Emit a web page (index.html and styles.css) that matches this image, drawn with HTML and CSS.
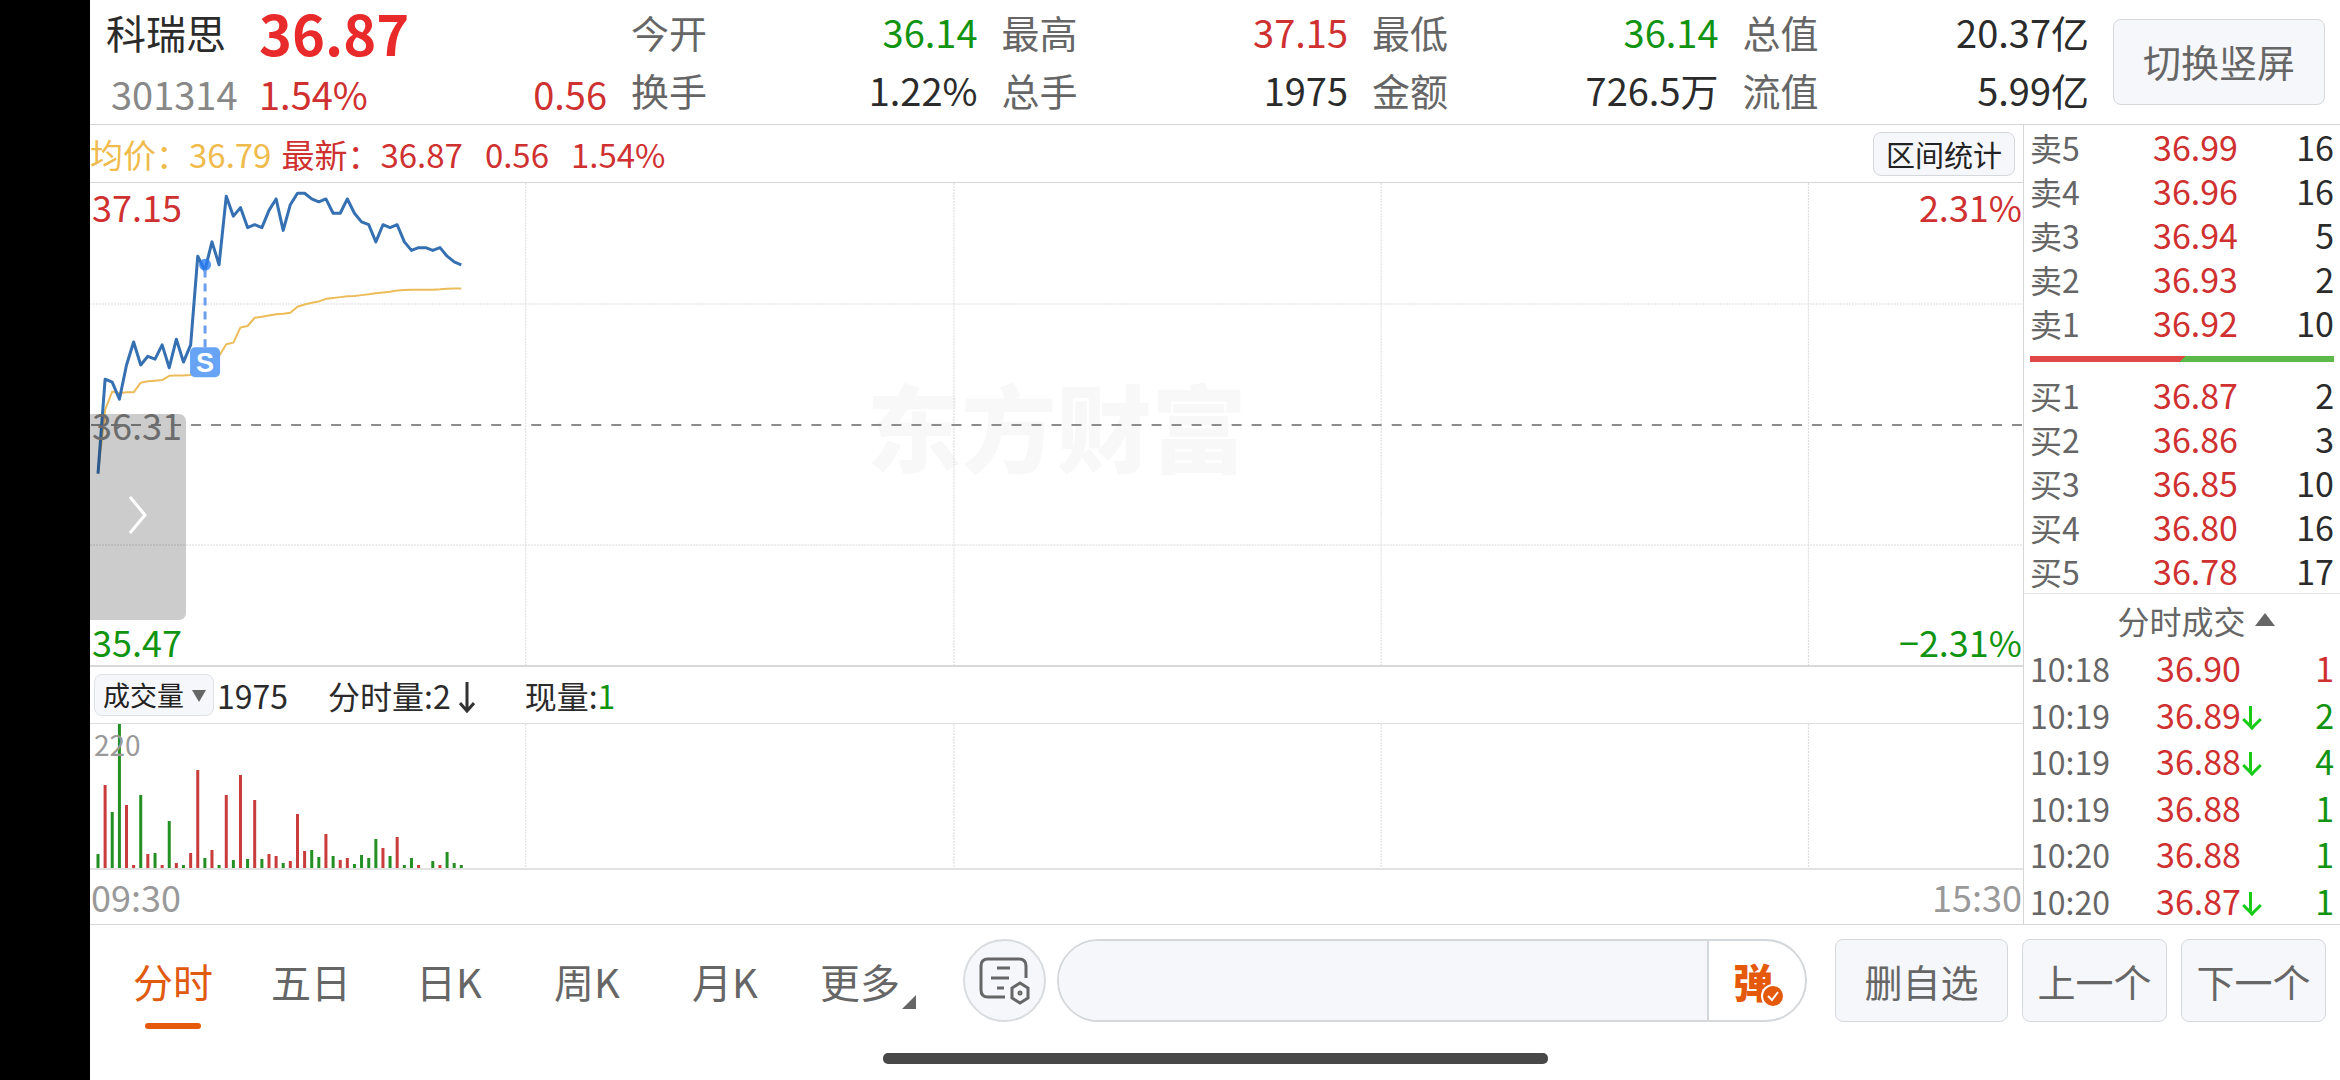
FILE: index.html
```html
<!DOCTYPE html>
<html lang="zh-CN">
<head>
    <meta charset="UTF-8">
    <meta name="viewport" content="width=device-width, initial-scale=1.0">
    <title>科瑞思 301314</title>
    <link rel="stylesheet" href="styles.css">
</head>
<body>
    <div class="app">
        <!-- 顶部行情 -->
        <header class="header">
            <div class="quote">
                <h1 class="stock-name">科瑞思</h1>
                <div class="last-price">36.87</div>
                <div class="stock-code">301314</div>
                <div class="change red"><span>1.54%</span><span>0.56</span></div>
            </div>
            <dl class="stats">
                <div class="stat"><dt>今开</dt><dd class="green">36.14</dd></div>
                <div class="stat"><dt>最高</dt><dd class="red">37.15</dd></div>
                <div class="stat"><dt>最低</dt><dd class="green">36.14</dd></div>
                <div class="stat"><dt>总值</dt><dd>20.37亿</dd></div>
                <div class="stat"><dt>换手</dt><dd>1.22%</dd></div>
                <div class="stat"><dt>总手</dt><dd>1975</dd></div>
                <div class="stat"><dt>金额</dt><dd>726.5万</dd></div>
                <div class="stat"><dt>流值</dt><dd>5.99亿</dd></div>
            </dl>
            <button class="btn btn-rotate">切换竖屏</button>
        </header>

        <main class="main">
            <section class="charts">
                <div class="legend">
                    <span class="legend-avg">均价：</span>
                    <span class="legend-avg legend-value">36.79</span>
                    <span class="red">最新：</span>
                    <span class="red legend-last">36.87</span>
                    <span class="red legend-last">0.56</span>
                    <span class="red">1.54%</span>
                    <button class="btn btn-range">区间统计</button>
                </div>

                <!-- 分时图 -->
                <div class="price-chart">
                    <div class="watermark">东方财富</div>
                    <svg class="plot" viewBox="0 0 1932 484" preserveAspectRatio="none">
                        <g class="grid">
                            <path d="M435.5 0V484M863.5 0V484M1290.5 0V484M1717.5 0V484"/>
                            <path d="M0 121.5H1932M0 363.5H1932"/>
                        </g>
                        <path class="base-line" d="M1 243H1932"/>
                        <polyline id="avgLine" class="avg-line"/>
                        <polyline id="priceLine" class="price-line"/>
                        <circle class="trade-dot" cx="115" cy="82" r="6"/>
                        <path class="trade-stem" d="M115 87V165"/>
                        <rect class="trade-box" x="100" y="165" width="30" height="30" rx="5"/>
                        <text class="trade-text" x="115" y="190">S</text>
                    </svg>
                    <span class="axis axis-high red">37.15</span>
                    <span class="axis axis-mid">36.31</span>
                    <span class="axis axis-low green">35.47</span>
                    <span class="axis axis-up red">2.31%</span>
                    <span class="axis axis-down green">−2.31%</span>
                    <button class="drawer" aria-label="展开">
                        <svg width="18" height="38" viewBox="0 0 18 38"><path d="M1 1L16 19L1 37"/></svg>
                    </button>
                </div>

                <!-- 成交量 -->
                <div class="volume-head">
                    <div class="select-wrap">
                        <select class="indicator" aria-label="指标">
                            <option>成交量</option>
                        </select>
                    </div>
                    <span class="volume-total">1975</span>
                    <span class="volume-minute">分时量:2<svg width="16" height="32" viewBox="0 0 16 32"><path d="M8 1V30M1 22L8 30L15 22"/></svg></span>
                    <span>现量:<span class="green">1</span></span>
                </div>
                <div class="volume-chart">
                    <svg class="plot" viewBox="0 0 1932 144" preserveAspectRatio="none">
                        <path class="grid" d="M435.5 0V144M863.5 0V144M1290.5 0V144M1717.5 0V144"/>
                        <g id="volumeBars"></g>
                    </svg>
                    <span class="volume-max">220</span>
                </div>
                <div class="time-axis"><span>09:30</span><span>15:30</span></div>
            </section>

            <aside class="side">
                <!-- 五档盘口 -->
                <table class="book">
                    <tr><th>卖5</th><td class="red">36.99</td><td>16</td></tr>
                    <tr><th>卖4</th><td class="red">36.96</td><td>16</td></tr>
                    <tr><th>卖3</th><td class="red">36.94</td><td>5</td></tr>
                    <tr><th>卖2</th><td class="red">36.93</td><td>2</td></tr>
                    <tr><th>卖1</th><td class="red">36.92</td><td>10</td></tr>
                </table>
                <div class="ratio"></div>
                <table class="book">
                    <tr><th>买1</th><td class="red">36.87</td><td>2</td></tr>
                    <tr><th>买2</th><td class="red">36.86</td><td>3</td></tr>
                    <tr><th>买3</th><td class="red">36.85</td><td>10</td></tr>
                    <tr><th>买4</th><td class="red">36.80</td><td>16</td></tr>
                    <tr><th>买5</th><td class="red">36.78</td><td>17</td></tr>
                </table>
                <button class="ticks-title">分时成交<svg width="20" height="13" viewBox="0 0 20 13"><path d="M10 0L20 13H0Z"/></svg></button>
                <table class="ticks">
                    <tr><th>10:18</th><td class="red">36.90</td><td class="arrow"></td><td class="red">1</td></tr>
                    <tr><th>10:19</th><td class="red">36.89</td><td class="arrow down"></td><td class="green">2</td></tr>
                    <tr><th>10:19</th><td class="red">36.88</td><td class="arrow down"></td><td class="green">4</td></tr>
                    <tr><th>10:19</th><td class="red">36.88</td><td class="arrow"></td><td class="green">1</td></tr>
                    <tr><th>10:20</th><td class="red">36.88</td><td class="arrow"></td><td class="green">1</td></tr>
                    <tr><th>10:20</th><td class="red">36.87</td><td class="arrow down"></td><td class="green">1</td></tr>
                </table>
            </aside>
        </main>

        <footer class="footer">
            <div class="toolbar">
                <nav class="tabs">
                    <button class="tab active">分时</button>
                    <button class="tab">五日</button>
                    <button class="tab">日K</button>
                    <button class="tab">周K</button>
                    <button class="tab">月K</button>
                    <button class="tab more">更多</button>
                </nav>
                <button class="btn-note" aria-label="设置">
                    <svg width="54" height="50" viewBox="0 0 54 50">
                        <path d="M27 41H10Q3 41 3 34V10Q3 3 10 3H41Q48 3 48 10V22"/>
                        <path d="M19 12H32M13 22H31M19 32H26"/>
                        <path d="M42 27L50 32V42L42 47L34 42V32Z"/>
                        <circle cx="42" cy="37" r="1"/>
                    </svg>
                </button>
                <div class="comment">
                    <input class="comment-input" type="text" aria-label="评论">
                    <button class="danmu" aria-label="弹幕">弹<svg width="24" height="24" viewBox="0 0 24 24"><circle cx="12" cy="12" r="11"/><path d="M7 12L11 16L17 8"/></svg></button>
                </div>
                <div class="actions">
                    <button class="btn btn-del">删自选</button>
                    <button class="btn btn-step">上一个</button>
                    <button class="btn btn-step">下一个</button>
                </div>
            </div>
            <div class="home-bar"></div>
        </footer>
    </div>
    <script src="chart.js"></script>
</body>
</html>
```
FILE: styles.css
```css
* { margin: 0; padding: 0; box-sizing: border-box; }
body { background: #000; font-family: "Noto Sans CJK SC", sans-serif; color: #2b2b2b; }
button, input, select { font-family: inherit; border: none; background: none; color: inherit; }
button { cursor: pointer; }
.red { color: #cf3030; }
.green { color: #119411; }

.app { margin-left: 90px; min-height: 100vh; background: #fff; display: flex; flex-direction: column; }
.btn { background: #f6f7fa; border: 1px solid #d5d8da; border-radius: 8px; color: #666; white-space: nowrap; }

/* 顶部行情 */
.header { display: flex; align-items: center; height: 125px; padding-right: 15px; border-bottom: 1px solid #d5d5d5; }
.quote { display: grid; grid-template-columns: 153px 348px; grid-template-rows: 62px 58px; width: 541px; padding-left: 16px; line-height: 60px; }
.stock-name { font-size: 40px; font-weight: 400; }
.last-price { font-size: 56px; font-weight: 700; color: #e92a2a; }
.stock-code { font-size: 38px; color: #888; padding-left: 5px; }
.change { display: flex; justify-content: space-between; font-size: 38px; }
.stats { flex: 1; display: grid; grid-template-columns: repeat(4, 1fr); column-gap: 24px; font-size: 38px; line-height: 58px; padding-bottom: 2px; }
.stat { display: flex; justify-content: space-between; }
.stat dt { color: #666; }
.btn-rotate { width: 212px; height: 86px; margin-left: 24px; padding-bottom: 4px; font-size: 38px; }

.main { flex: 1; display: grid; grid-template-columns: 1fr 317px; }
.charts { display: flex; flex-direction: column; }

.legend { display: flex; align-items: center; height: 58px; font-size: 33px; border-bottom: 1px solid #d5d5d5; padding-right: 8px; }
.legend-avg { color: #efbb4c; }
.legend-value { margin-right: 10px; }
.legend-last { margin-right: 22px; }
.btn-range { width: 142px; height: 44px; margin-left: auto; font-size: 29px; line-height: 38px; color: #222; }

/* 分时图 */
.price-chart { position: relative; flex: 1; min-height: 300px; border-bottom: 2px solid #d8d8d8; }
.plot { position: absolute; left: 0; top: 0; width: 100%; height: 100%; }
.grid { stroke: #dadada; stroke-width: 1; stroke-dasharray: 2 1; fill: none; }
.base-line { stroke: #8c8c8c; stroke-width: 2; stroke-dasharray: 10 10; }
.price-line { fill: none; stroke: #3470b2; stroke-width: 3; stroke-linejoin: round; }
.avg-line { fill: none; stroke: #ecbc5a; stroke-width: 2; stroke-linejoin: round; }
.trade-dot { fill: #2a7df5; opacity: .8; }
.trade-stem { stroke: #6b9fea; stroke-width: 3; stroke-dasharray: 8 6; }
.trade-box { fill: #5f9ff5; opacity: .95; }
.trade-text { fill: #fff; font: 700 27px "Liberation Sans", sans-serif; text-anchor: middle; }
.watermark { position: absolute; left: 50%; top: 50%; transform: translate(-50%, -50%); font-size: 95px; line-height: 95px; font-weight: 900; color: #f8f8f8; white-space: nowrap; }
.axis { position: absolute; left: 2px; font-size: 36px; line-height: 40px; }
.axis-high, .axis-up { top: 3px; }
.axis-mid { top: 50%; margin-top: -20px; color: #888; }
.axis-low, .axis-down { bottom: 4px; }
.axis-up, .axis-down { left: auto; right: 1px; }
.drawer { position: absolute; left: 0; top: 48%; width: 96px; height: 206px; border-radius: 0 7px 7px 0; background: rgba(0, 0, 0, .2); }
.drawer svg { fill: none; stroke: #fff; stroke-width: 3; }

/* 成交量 */
.volume-head { display: flex; align-items: center; height: 57px; padding-left: 4px; font-size: 32px; border-bottom: 1px solid #dedede; }
.select-wrap { position: relative; margin-right: 3px; }
.select-wrap::after { content: ""; position: absolute; right: 8px; top: 16px; border: 7px solid transparent; border-top: 12px solid #666; border-bottom: none; pointer-events: none; }
.indicator { appearance: none; width: 120px; height: 42px; padding-left: 8px; font-size: 27px; line-height: 38px; color: #222; background: #f6f7fa; border: 1px solid #dfe2e4; border-radius: 8px; display: block; }
.volume-total { margin-right: 40px; }
.volume-minute { margin-right: 50px; }
.volume-minute svg { margin-left: 8px; vertical-align: -4px; fill: none; stroke: #333; stroke-width: 3; }
.volume-chart { position: relative; height: 146px; border-bottom: 2px solid #e2e2e2; }
.volume-max { position: absolute; left: 4px; top: 5px; font-size: 28px; line-height: 30px; color: #999; }
.time-axis { display: flex; justify-content: space-between; height: 54px; padding: 0 1px; font-size: 36px; line-height: 52px; color: #999; }

/* 右侧盘口 */
.side { display: flex; flex-direction: column; border-left: 1px solid #d5d5d5; }
.side table { width: 100%; border-collapse: collapse; table-layout: fixed; font-size: 34px; }
.side th { width: 100px; padding-left: 6px; text-align: left; font-size: 32px; font-weight: 400; color: #666; }
.side td { text-align: right; }
.side td:last-child { padding-right: 6px; }
.side td:nth-child(2) { width: 114px; }
.book tr { height: 44px; line-height: 44px; }
.ratio { height: 6px; margin: 11px 6px; background: linear-gradient(135deg, #e04848 50%, #5cb848 50%); }
.ticks-title { width: 100%; height: 52px; padding-left: 28px; border-top: 1px solid #e5e5e5; font-size: 32px; line-height: 48px; color: #666; }
.ticks-title svg { margin-left: 9px; vertical-align: 8px; fill: #666; }
.ticks { flex: 1; }
.ticks tr { height: 46px; line-height: 46px; }
.side .ticks td:nth-child(2) { width: 117px; }
.ticks .arrow { position: relative; width: 24px; }
.down::before { content: ""; position: absolute; left: 8px; top: 14px; width: 3px; height: 19px; background: #18cc18; }
.down::after { content: ""; position: absolute; left: 4px; top: 21px; width: 11px; height: 11px; border: solid #18cc18; border-width: 0 3px 3px 0; transform: rotate(45deg); }

/* 底部工具栏 */
.footer { border-top: 1px solid #d5d8da; padding: 14px 0 16px; }
.toolbar { display: flex; align-items: center; padding: 0 14px; }
.tabs { display: flex; height: 82px; margin-right: 31px; }
.tab { position: relative; width: 138px; font-size: 40px; line-height: 78px; color: #666; }
.active { color: #e05a10; }
.active::after { content: ""; position: absolute; left: 50%; bottom: -7px; width: 56px; height: 6px; margin-left: -28px; border-radius: 3px; background: #e5590c; }
.more { padding-right: 6px; }
.more::after { content: ""; position: absolute; right: 16px; bottom: 13px; border-left: 14px solid transparent; border-bottom: 14px solid #666; }
.btn-note { width: 83px; height: 83px; border: 2px solid #d9dcde; border-radius: 50%; background: #f6f7fa; }
.btn-note svg { display: block; margin: 0 auto; fill: none; stroke: #666; stroke-width: 3; }
.comment { flex: 1; display: flex; height: 83px; margin: 0 28px 0 11px; border: 2px solid #d5d8da; border-radius: 42px; overflow: hidden; }
.comment-input { flex: 1; min-width: 0; padding-left: 40px; font-size: 34px; background: #f6f7fa; border-right: 2px solid #d5d8da; outline: none; }
.danmu { position: relative; width: 96px; padding-right: 8px; font-size: 40px; line-height: 74px; font-weight: 900; color: #e5590c; }
.danmu svg { position: absolute; left: 52px; top: 43px; fill: #e5590c; stroke: #fff; stroke-width: 2; }
.actions { display: flex; gap: 14px; }
.actions .btn { height: 83px; font-size: 38px; line-height: 76px; }
.btn-del { width: 173px; }
.btn-step { width: 145px; }
.home-bar { width: 665px; height: 11px; margin: 31px auto 0; border-radius: 5px; background: #484848; }
```
FILE: chart.js
```js
const STEP = 7.12;
const START = 8;
const PRE_CLOSE = 36.31;
const SCALE = 287.3; // 每1元对应的高度
const MID = 243;

// 每分钟价格
const prices = [
    36.14, 36.47, 36.46, 36.40, 36.52, 36.60, 36.52, 36.55, 36.54, 36.59, 36.51, 36.61, 36.53,
    36.59, 36.90, 36.85, 36.95, 36.87, 37.11, 37.04, 37.07, 37.00, 37.01, 37.00, 37.06, 37.10,
    36.99, 37.08, 37.12, 37.12, 37.10, 37.09, 37.10, 37.05, 37.05, 37.10, 37.05, 37.02, 37.01,
    36.95, 37.01, 37.00, 37.01, 36.95, 36.92, 36.93, 36.93, 36.92, 36.93, 36.90, 36.88, 36.87
];

// 每分钟均价
const averages = [
    36.140, 36.363, 36.427, 36.421, 36.424, 36.424, 36.458, 36.463, 36.465, 36.467, 36.482, 36.483, 36.483,
    36.485, 36.532, 36.543, 36.548, 36.551, 36.592, 36.598, 36.651, 36.656, 36.685, 36.688, 36.693, 36.697,
    36.699, 36.702, 36.723, 36.731, 36.737, 36.742, 36.751, 36.754, 36.757, 36.760, 36.761, 36.764, 36.767,
    36.771, 36.773, 36.776, 36.780, 36.782, 36.783, 36.783, 36.783, 36.783, 36.784, 36.786, 36.787, 36.787
];

// 成交量柱高，负数为绿柱
const volumes = [
    -14, 83, -56, -144, 63, 3, -73, 14, -15, 3, -47, 5, -3,
    15, 98, -10, 18, -3, 73, -8, 93, -9, 68, -9, 14, 12,
    -5, 7, 54, 17, -18, -11, 34, -12, 8, 10, -4, -13, -10,
    -29, 20, -12, 31, -3, -10, 3, 0, -7, 3, -16, -5, -3
];

function toPoints(list) {
    return list.map((p, i) => `${(START + i * STEP).toFixed(1)},${(MID - (p - PRE_CLOSE) * SCALE).toFixed(1)}`).join(' ');
}

document.getElementById('priceLine').setAttribute('points', toPoints(prices));
document.getElementById('avgLine').setAttribute('points', toPoints(averages));

document.getElementById('volumeBars').innerHTML = volumes.map((v, i) => {
    const h = Math.abs(v);
    const color = v < 0 ? '#249024' : '#c83c3c';
    return `<rect x="${(START + i * STEP - 1.5).toFixed(1)}" y="${144 - h}" width="3" height="${h}" fill="${color}"/>`;
}).join('');
```
